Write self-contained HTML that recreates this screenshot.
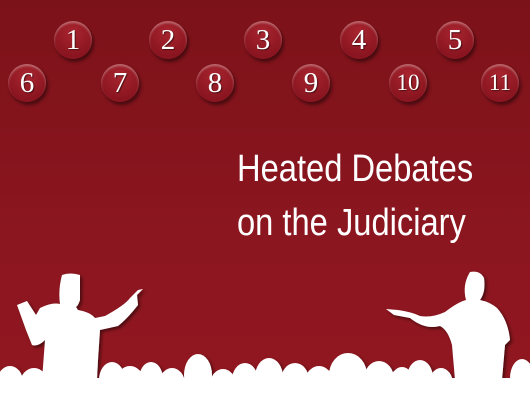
<!DOCTYPE html>
<html><head><meta charset="utf-8"><style>
html,body{margin:0;padding:0}
body{width:530px;height:410px;overflow:hidden;position:relative;background:linear-gradient(#7c1219,#8c1620 60%,#92171f);font-family:"Liberation Serif",serif}
.c{position:absolute;width:38px;height:38px;border-radius:50%;background:radial-gradient(circle at 50% 30%,#a8252f,#8a1520 70%);box-shadow:2px 3px 3px rgba(0,0,0,.45),inset 0 2px 2px rgba(255,255,255,.35);color:#fff;text-align:center;line-height:38px;font-size:29px;text-shadow:1px 1px 1px rgba(0,0,0,.5)}
.t{position:absolute;left:237px;color:#fff;font-family:"Liberation Sans Narrow","Liberation Sans",sans-serif;font-size:38px;white-space:nowrap;transform-origin:0 0;transform:scaleX(.86)}
</style></head><body>
<div class="c" style="left:54px;top:21px">1</div>
<div class="c" style="left:149px;top:21px">2</div>
<div class="c" style="left:244px;top:21px">3</div>
<div class="c" style="left:340px;top:21px">4</div>
<div class="c" style="left:436px;top:21px">5</div>
<div class="c" style="left:8px;top:64px">6</div>
<div class="c" style="left:101px;top:64px">7</div>
<div class="c" style="left:196px;top:64px">8</div>
<div class="c" style="left:292px;top:64px">9</div>
<div class="c" style="left:389px;top:64px;font-size:23px">10</div>
<div class="c" style="left:481px;top:64px;font-size:23px">11</div>
<div class="t" style="top:148px">Heated Debates</div>
<div class="t" style="top:202px">on the Judiciary</div>
<svg width="530" height="410" style="position:absolute;left:0;top:0">
<defs><filter id="s"><feDropShadow dx="2" dy="2" stdDeviation="1.5" flood-color="#000" flood-opacity=".5"/></filter></defs>
<g fill="#fff" filter="url(#s)">
<path d="M62 275 Q70 272 80 275 L80 300 Q78 306 76 307 L78 310 Q90 312 95 318 L105 316 Q125 305 130 298 L138 290 L143 289 L137 295 L138 305 Q128 318 118 326 L100 330 L98 360 L97 380 L42 380 L45 340 Q38 347 32 345 L26 330 L17 305 L27 301 L36 315 L40 308 Q52 302 60 304 Q58 290 62 275Z"/>
<path d="M470 272 Q480 270 484 278 Q486 292 480 300 Q490 302 497 308 Q508 320 510 340 L505 345 L502 380 L455 380 L452 345 Q448 330 440 326 Q425 330 410 318 L394 315 L386 309 L398 310 Q412 312 420 316 Q432 318 445 312 Q458 302 466 300 Q462 285 470 272Z"/>
<ellipse cx="10" cy="382" rx="13" ry="16"/>
<ellipse cx="34" cy="384" rx="14" ry="16"/>
<ellipse cx="112" cy="380" rx="13" ry="18"/>
<ellipse cx="130" cy="382" rx="14" ry="16"/>
<ellipse cx="151" cy="379" rx="12" ry="17"/>
<ellipse cx="172" cy="384" rx="13" ry="16"/>
<ellipse cx="198" cy="375" rx="14" ry="21"/>
<ellipse cx="223" cy="385" rx="13" ry="16"/>
<ellipse cx="245" cy="380" rx="13" ry="17"/>
<ellipse cx="269" cy="377" rx="14" ry="19"/>
<ellipse cx="295" cy="380" rx="14" ry="17"/>
<ellipse cx="319" cy="382" rx="14" ry="16"/>
<ellipse cx="348" cy="375" rx="19" ry="22"/>
<ellipse cx="379" cy="379" rx="15" ry="18"/>
<ellipse cx="402" cy="383" rx="12" ry="16"/>
<ellipse cx="420" cy="378" rx="13" ry="18"/>
<ellipse cx="441" cy="384" rx="12" ry="16"/>
<ellipse cx="522" cy="378" rx="12" ry="19"/>
<rect x="0" y="378" width="530" height="40"/>
</g>
</svg>
</body></html>
